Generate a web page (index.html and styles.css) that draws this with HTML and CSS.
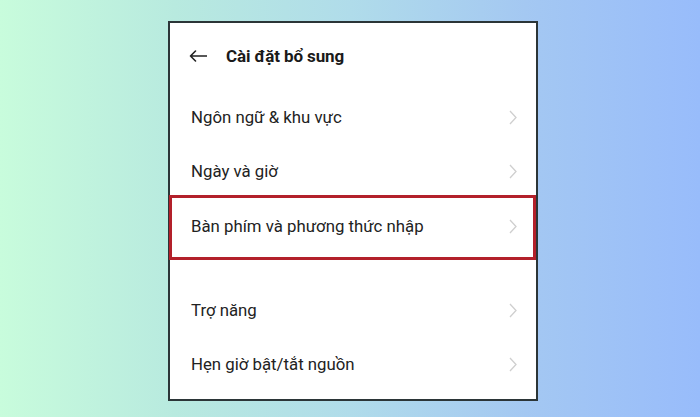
FILE: index.html
```html
<!DOCTYPE html>
<html lang="vi">
<head>
<meta charset="utf-8">
<link rel="stylesheet" href="styles.css">
</head>
<body>
<div class="stage">
  <div class="panel">
    <div class="header">
      <svg class="back" width="18" height="12" viewBox="0 0 18 12"><path d="M17.5 6H1.5M6.5 1L1.5 6l5 5" fill="none" stroke="#222" stroke-width="1.6" stroke-linecap="round" stroke-linejoin="round"/></svg>
      <span class="title">Cài đặt bổ sung</span>
    </div>
    <div class="row"><span>Ngôn ngữ &amp; khu vực</span><svg class="chev" width="8" height="15" viewBox="0 0 8 15"><path d="M1 1l6 6.5L1 14" fill="none" stroke="#cfcfcf" stroke-width="1.3"/></svg></div>
    <div class="row"><span>Ngày và giờ</span><svg class="chev" width="8" height="15" viewBox="0 0 8 15"><path d="M1 1l6 6.5L1 14" fill="none" stroke="#cfcfcf" stroke-width="1.3"/></svg></div>
    <div class="row hl"><span>Bàn phím và phương thức nhập</span><svg class="chev" width="8" height="15" viewBox="0 0 8 15"><path d="M1 1l6 6.5L1 14" fill="none" stroke="#cfcfcf" stroke-width="1.3"/></svg></div>
    <div class="row sec"><span>Trợ năng</span><svg class="chev" width="8" height="15" viewBox="0 0 8 15"><path d="M1 1l6 6.5L1 14" fill="none" stroke="#cfcfcf" stroke-width="1.3"/></svg></div>
    <div class="row"><span>Hẹn giờ bật/tắt nguồn</span><svg class="chev" width="8" height="15" viewBox="0 0 8 15"><path d="M1 1l6 6.5L1 14" fill="none" stroke="#cfcfcf" stroke-width="1.3"/></svg></div>
  </div>
</div>
</body>
</html>
```
FILE: styles.css
```css
html, body {
  margin: 0;
  padding: 0;
}
body {
  width: 700px;
  height: 417px;
  overflow: hidden;
  background: linear-gradient(90deg, #c8fcdc 0%, #b8eadf 25%, #b0dcea 50%, #a4c8f2 75%, #98bcfb 100%);
  font-family: Roboto, "Noto Sans", sans-serif;
}
.stage {
  padding: 21px 0 0 168px;
}
.panel {
  width: 366px;
  height: 376px;
  border: 2px solid #2b3537;
  background: #fff;
  display: flex;
  flex-direction: column;
}
.header {
  height: 67px;
  box-sizing: border-box;
  padding: 0 0 2px 19px;
  display: flex;
  align-items: center;
}
.back {
  display: block;
  margin-right: 19px;
}
.title {
  font-size: 17px;
  font-weight: 700;
  color: #1a1a1a;
  letter-spacing: -0.1px;
}
.row {
  height: 54px;
  box-sizing: border-box;
  display: flex;
  align-items: center;
  justify-content: space-between;
  padding: 0 19px 0 21px;
  font-size: 16.8px;
  color: #222;
}
.row.hl {
  height: 65px;
  margin-top: -3px;
  margin-left: -1px;
  border: 3px solid #b3202a;
  padding: 0 16px 3px 19px;
  width: calc(100% + 1px);
}
.row.sec {
  margin-top: 23px;
}
.chev {
  display: block;
}
```
